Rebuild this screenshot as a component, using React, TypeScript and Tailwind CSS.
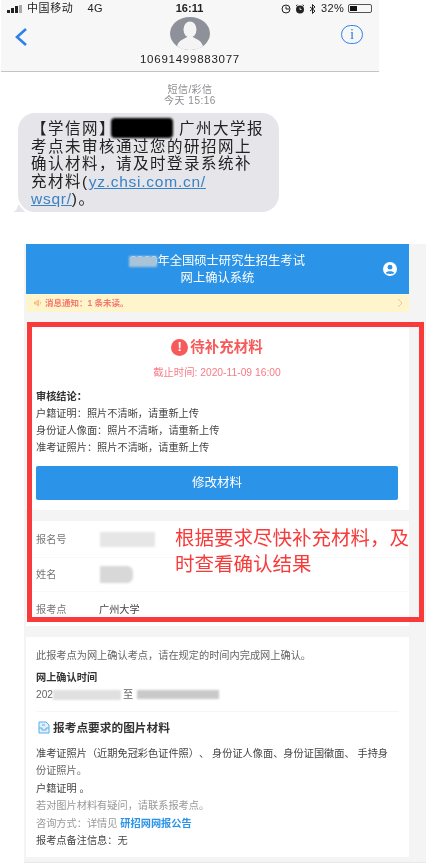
const font = "font-['Liberation_Sans','Noto_Sans_CJK_SC',sans-serif]"

function SignalBars() {
  return (
    <div className="flex items-end gap-[1px]">
      <div className="h-[3px] w-[3px] bg-[#222]" />
      <div className="h-[5px] w-[3px] bg-[#222]" />
      <div className="h-[7px] w-[3px] bg-[#222]" />
      <div className="h-[8px] w-[3px] bg-[#aaa]" />
    </div>
  )
}

function StatusBar() {
  return (
    <div className="flex h-[17px] items-center justify-between pl-[6px] pr-[7px] text-[11px] text-[#222]">
      <div className="flex w-[140px] items-center gap-[5px]">
        <SignalBars />
        <span className="tracking-[0.6px]">中国移动</span>
        <span className="ml-[9px] tracking-[0.5px]">4G</span>
      </div>
      <span className="font-bold">16:11</span>
      <div className="flex w-[140px] items-center justify-end gap-[4px]">
        <svg width="10" height="10" viewBox="0 0 10 10">
          <circle cx="5" cy="5" r="4" fill="none" stroke="#222" strokeWidth="1" />
          <path d="M5 2.5V5H8" fill="none" stroke="#222" strokeWidth="1" />
        </svg>
        <svg width="10" height="10" viewBox="0 0 10 10">
          <circle cx="5" cy="5.5" r="4" fill="#222" />
          <path d="M5 3.5V5.5H6.5" fill="none" stroke="#fff" strokeWidth="0.8" />
          <path d="M1 2L2.5 0.8M9 2L7.5 0.8" stroke="#222" strokeWidth="1" />
        </svg>
        <svg width="7" height="10" viewBox="0 0 7 10">
          <path d="M1 3L6 7L3.5 9.5V0.5L6 3L1 7" fill="none" stroke="#222" strokeWidth="1" />
        </svg>
        <span className="ml-[1px] tracking-[0.3px]">32%</span>
        <div className="flex h-[9px] w-[24px] items-center rounded-[2px] border border-[#555] p-[1px]">
          <div className="h-full w-[7px] bg-[#111]" />
        </div>
      </div>
    </div>
  )
}

function NavBar() {
  return (
    <div className="relative flex h-[55px] justify-between border-b border-[#c4c4c4] px-[13px] pt-[9px]">
      <div className="w-[40px]">
        <svg width="14" height="20" viewBox="0 0 14 20" className="mt-[1px]">
          <path d="M12 2L3 10L12 18" fill="none" stroke="#2f80ed" strokeWidth="2.6" />
        </svg>
      </div>
      <div className="flex flex-col items-center">
        <svg width="40" height="33" viewBox="0 0 40 33" className="-mt-[9px]">
          <ellipse cx="20" cy="16.5" rx="20" ry="16.5" fill="#8e9199" />
          <ellipse cx="20" cy="12.5" rx="6.5" ry="8" fill="#f4f4f4" />
          <path d="M7 29C9 23 14 22 17 20H23C26 22 31 23 33 29C29 32 24 33 20 33C16 33 11 32 7 29Z" fill="#f4f4f4" />
        </svg>
        <span className="mt-[2px] text-[11.5px] leading-[14px] tracking-[0.75px] text-[#222]">10691499883077</span>
      </div>
      <div className="flex w-[40px] justify-end">
        <div className="mr-[3px] mt-[-1px] flex h-[19px] w-[22px] items-center justify-center rounded-full border border-[#2f80ed] text-[15px] leading-none text-[#2f80ed] font-['Liberation_Serif',serif]">
          i
        </div>
      </div>
    </div>
  )
}

function SmsThread() {
  return (
    <div className="pt-[12px]">
      <div className="text-center text-[10px] leading-[11px] text-[#8e8e93]">
        <div className="tracking-[0.4px]">短信/彩信</div>
        <div className="tracking-[0.5px]">今天 15:16</div>
      </div>
      <div className="relative ml-[17px] mt-[7px] h-[99px] w-[261px] rounded-[17px] bg-[#e5e5ea] pl-[13px] pt-[7px] text-[15.5px] leading-[17.6px] tracking-[1.5px] text-[#222]">
        <div className="relative whitespace-nowrap">
          <span>【学信网】</span>
          <span className="absolute left-[80px] top-[-2px] h-[20px] w-[62px] rounded-[4px] bg-black blur-[1px]" />
          <span className="ml-[63px]">广州大学报</span>
        </div>
        <div className="whitespace-nowrap">考点未审核通过您的研招网上</div>
        <div className="whitespace-nowrap">确认材料，请及时登录系统补</div>
        <div className="whitespace-nowrap">
          充材料(<span className="tracking-[0.75px] text-[#3b82c4] underline">yz.chsi.com.cn/</span>
        </div>
        <div className="whitespace-nowrap">
          <span className="tracking-[0.75px] text-[#3b82c4] underline">wsqr/</span>)。
        </div>
        <svg width="12" height="8" viewBox="0 0 12 8" className="absolute -left-[5px] bottom-0">
          <path d="M0 8C3 7 5 4 5 0L12 8Z" fill="#e5e5ea" />
        </svg>
      </div>
    </div>
  )
}

function HeaderBlock() {
  return (
    <>
      <div className="relative flex h-[50px] flex-col items-center justify-center bg-[#2b93e8] pt-[2px] text-[12.3px] leading-[17.5px] text-white">
        <div className="relative">
          2020年全国硕士研究生招生考试
          <span className="absolute -left-[1px] top-[3px] h-[11px] w-[28px] bg-[#a9c4d9] blur-[1px]" />
        </div>
        <div>网上确认系统</div>
        <div className="absolute right-[12px] top-[18px] flex h-[14px] w-[14px] items-center justify-center overflow-hidden rounded-full bg-white">
          <svg width="14" height="14" viewBox="0 0 14 14">
            <circle cx="7" cy="5.2" r="2.4" fill="#2b93e8" />
            <path d="M2.8 11C3.5 8.8 10.5 8.8 11.2 11C10 12.2 4 12.2 2.8 11Z" fill="#2b93e8" />
          </svg>
        </div>
      </div>
      <div className="flex h-[18px] items-center justify-between bg-[#fff5cc] pl-[8px] pr-[6px] text-[8.5px] font-bold text-[#f57a6c]">
        <div className="flex items-center gap-[3px]">
          <svg width="8" height="8" viewBox="0 0 8 8">
            <path d="M0.5 3H2L4.5 1V7L2 5H0.5Z" fill="#fbd49a" stroke="#f5a060" strokeWidth="0.6" />
            <path d="M6 2.5C6.8 3.5 6.8 4.5 6 5.5" fill="none" stroke="#f5a060" strokeWidth="0.6" />
          </svg>
          <span>消息通知：1 条未读。</span>
        </div>
        <svg width="6" height="10" viewBox="0 0 6 10">
          <path d="M1 1L5 5L1 9" fill="none" stroke="#f5b58a" strokeWidth="0.8" />
        </svg>
      </div>
    </>
  )
}

function StatusCard() {
  return (
    <div className="mt-[15px] h-[183px] bg-white pl-[10px] pr-[11px] pt-[10px] text-[10.2px] text-[#444]">
      <div className="flex items-center justify-center gap-[2px] text-[14.5px] font-bold leading-[20px] text-[#f65a5a]">
        <div className="flex h-[17px] w-[17px] items-center justify-center rounded-full bg-[#f65a5a] text-[13px] text-white">!</div>
        <span>待补充材料</span>
      </div>
      <div className="mt-[10px] text-center text-[10.3px] leading-[12px] text-[#f77b85]">截止时间: 2020-11-09 16:00</div>
      <div className="mt-[9px] font-bold leading-[17px] text-[#333]">审核结论：</div>
      <div className="leading-[17px]">户籍证明：照片不清晰，请重新上传</div>
      <div className="leading-[17px]">身份证人像面：照片不清晰，请重新上传</div>
      <div className="leading-[17px]">准考证照片：照片不清晰，请重新上传</div>
      <div className="mt-[10px] flex h-[34px] items-center justify-center rounded-[2px] bg-[#2b93e8] text-[12.5px] text-white">修改材料</div>
    </div>
  )
}

function InfoRow({ label, children, last }: { label: string; children: React.ReactNode; last?: boolean }) {
  return (
    <div className={`flex h-[34.5px] items-center pl-[10px] text-[10.2px] ${last ? '' : 'border-b border-[#f8f8f8]'}`}>
      <span className="w-[63px] text-[#777]">{label}</span>
      {children}
    </div>
  )
}

function InfoCard() {
  return (
    <div className="mt-[11px] h-[105px] bg-white pt-[2px]">
      <InfoRow label="报名号">
        <div className="ml-[1px] h-[15px] w-[55px] bg-[#e6e6e6] blur-[1px]" />
      </InfoRow>
      <InfoRow label="姓名">
        <div className="ml-[1px] h-[17px] w-[33px] rounded-r-[6px] bg-[#d8d8d8] blur-[1px]" />
      </InfoRow>
      <InfoRow label="报考点" last>
        <span className="text-[#444]">广州大学</span>
      </InfoRow>
    </div>
  )
}

function MaterialsCard() {
  return (
    <div className="mt-[11px] h-[220px] bg-white px-[10px] pt-[10px] text-[10.2px] leading-[17.5px] text-[#666]">
      <div>此报考点为网上确认考点，请在规定的时间内完成网上确认。</div>
      <div className="mt-[4px] font-bold text-[#333]">网上确认时间</div>
      <div className="flex items-center">
        <span>202</span>
        <div className="h-[10px] w-[68px] bg-[#e0e0e0] blur-[1px]" />
        <span className="ml-[2px]">至</span>
        <div className="ml-[4px] h-[9px] w-[82px] bg-[#c9c9c9] blur-[1px]" />
      </div>
      <div className="mt-[7px] border-t border-[#f6f6f6] pt-[6px]">
        <div className="flex items-center gap-[3px] text-[11.7px] font-bold leading-[20px] text-[#333]">
          <svg width="12" height="13" viewBox="0 0 12 13" className="ml-[2px]">
            <path d="M1 1H8L11 4V12H1Z" fill="#dff0fb" stroke="#5aaeea" strokeWidth="1" />
            <path d="M1 7H4V9H8V7H11M4 4H7" fill="none" stroke="#5aaeea" strokeWidth="1" />
          </svg>
          <span>报考点要求的图片材料</span>
        </div>
      </div>
      <div className="mt-[7px] whitespace-nowrap text-[#444]">准考证照片（近期免冠彩色证件照）、 身份证人像面、身份证国徽面、 手持身</div>
      <div>份证照片。</div>
      <div className="text-[#444]">户籍证明 。</div>
      <div className="text-[#999]">若对图片材料有疑问，请联系报考点。</div>
      <div className="text-[#999]">
        咨询方式：详情见 <span className="font-bold text-[#2b93e8]">研招网网报公告</span>
      </div>
      <div className="text-[#444]">报考点备注信息：无</div>
    </div>
  )
}

function WebCapture() {
  return (
    <div className="relative ml-[24px] mt-[32px] h-[619px] w-[402px] border-b border-[#e8e8e8] bg-[#f4f4f4] pl-[2px] pr-[17px]">
      <HeaderBlock />
      <StatusCard />
      <InfoCard />
      <MaterialsCard />
      {/* 赤枠と注釈 */}
      <div className="absolute left-[3px] top-[78px] h-[300px] w-[397px] border-[5px] border-[#f93a3a]" />
      <div className="absolute left-[151px] top-[281px] w-[240px] text-[19.5px] leading-[26px] text-[#f93a3a]">
        根据要求尽快补充材料，及时查看确认结果
      </div>
    </div>
  )
}

export default function App() {
  return (
    <div className={`h-[863px] w-[431px] overflow-hidden bg-white blur-[0.35px] [text-spacing-trim:space-all] ${font}`}>
      <div className="ml-[1px] w-[378px] bg-[#f7f7f7]">
        <StatusBar />
        <NavBar />
      </div>
      <div className="ml-[1px] w-[378px]">
        <SmsThread />
      </div>
      <WebCapture />
    </div>
  )
}
